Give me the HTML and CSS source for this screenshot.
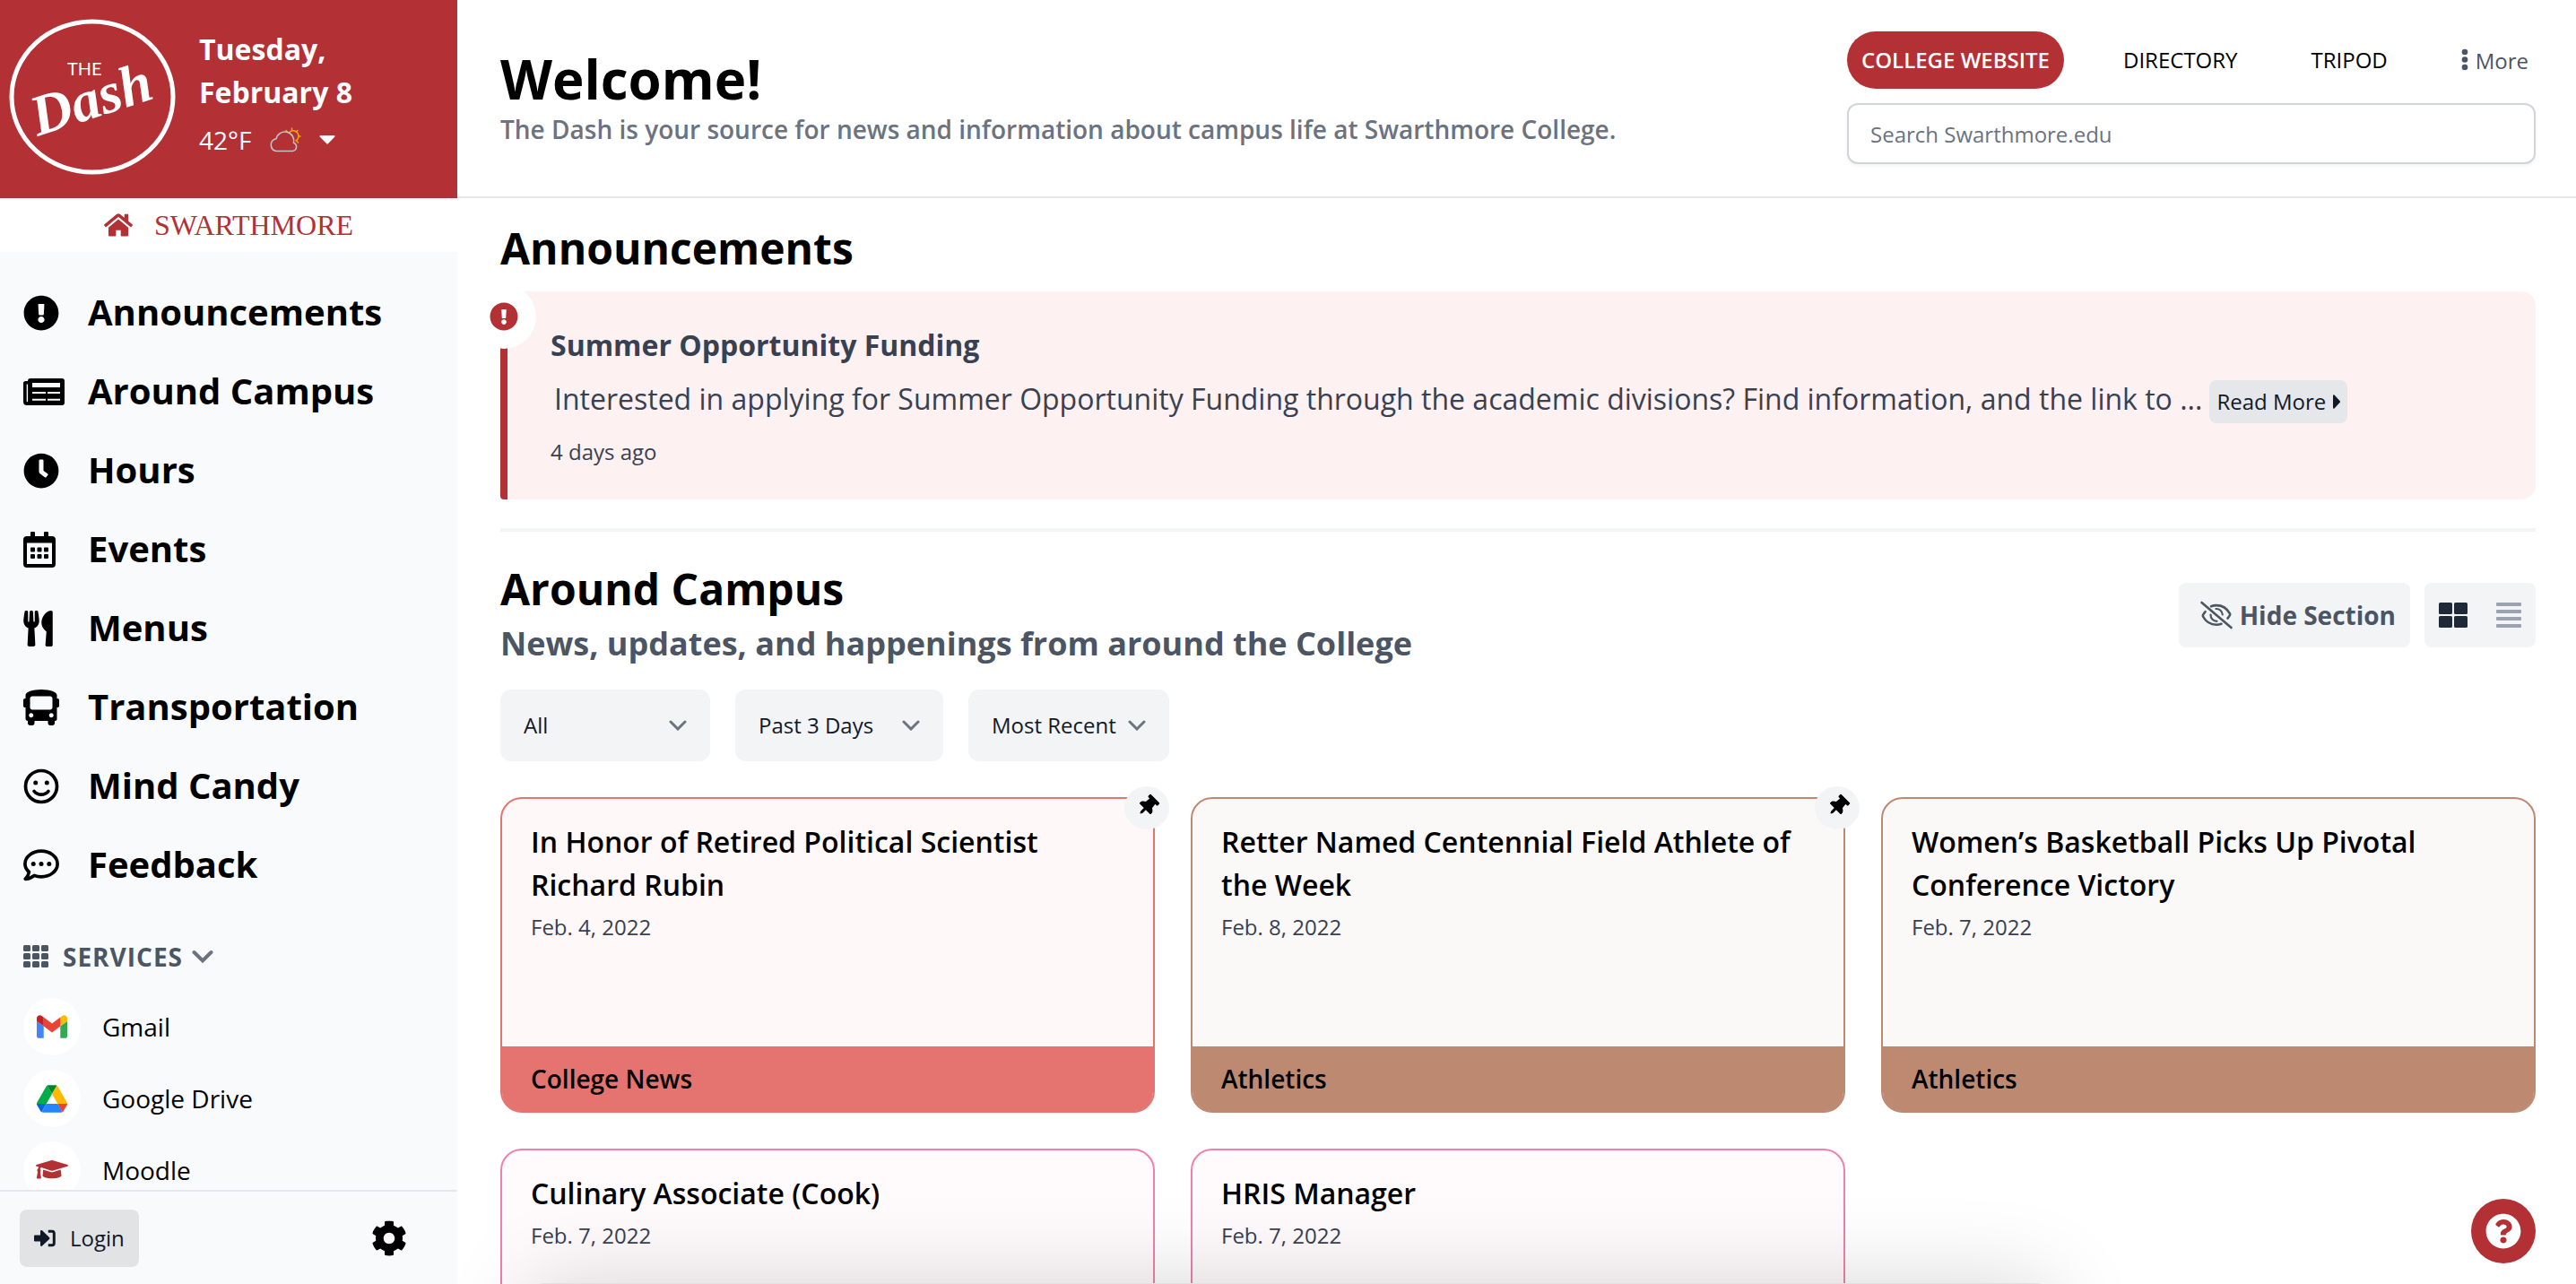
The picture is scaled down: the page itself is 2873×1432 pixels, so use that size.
FILE: index.html
```html
<!DOCTYPE html>
<html lang="en">
<head>
  <meta charset="UTF-8">
  <meta name="viewport" content="width=device-width, initial-scale=1.0">
  <title>The Dash</title>
  <link rel="stylesheet" href="styles.css">
</head>
<body>
  <div class="app">
    <aside class="sidebar">
      <div class="brand">
        <svg class="brand-logo" viewBox="0 0 186 176" role="img" aria-label="The Dash">
          <ellipse cx="93" cy="88" rx="90" ry="84" fill="none" stroke="#fff" stroke-width="5"/>
          <text class="logo-the" x="65" y="64">THE</text>
          <text class="logo-dash" x="32" y="132" transform="rotate(-18 32 132)">Dash</text>
        </svg>
        <div class="brand-info">
          <div class="brand-date">Tuesday,<br>February 8</div>
          <div class="brand-weather">
            <span>42°F</span>
            <svg class="weather-icon" viewBox="0 0 36 28" fill="none" stroke-linecap="round">
              <g stroke="#f5a800" stroke-width="1.5">
                <path d="M22 6.5a6 6 0 1 1 8 8.5"/>
                <path d="M25.5 1v2M19 3.5l1.5 1.5M32 3.5l-1.5 1.5M33 10h2M31 15.5l1.5 1.5"/>
              </g>
              <path d="M8 26.5a7 7 0 0 1-1-13.5 4.500 4.500 0 0 1 1-.2 10 10 0 0 1 19.500 4.500 4.800 4.800 0 0 1-1 9.200z" fill="#b33035" stroke="#c4c4c4" stroke-width="1.6"/>
            </svg>
            <svg class="weather-caret" viewBox="0 0 18 10" fill="#fff"><path d="M1.5 0h15a1 1 0 0 1 .7 1.7L9.800 9.200a1 1 0 0 1-1.500 0L.8 1.700A1 1 0 0 1 1.500 0z"/></svg>
          </div>
        </div>
      </div>

      <a class="home-link" href="#">
        <svg class="home-icon" viewBox="0 0 32 26" fill="currentColor">
          <path d="M16 6.5 5 15.7V24.500a1 1 0 0 0 1 1h6.500a.8.8 0 0 0 .8-.8v-6h5.400v6a.8.8 0 0 0 .8.8H26a1 1 0 0 0 1-1v-8.800z"/>
          <path d="M27 8.500V1.500a.8.8 0 0 0-.8-.8h-2.700a.8.8 0 0 0-.8.800v3.200L18 1a3.200 3.200 0 0 0-4 0L.4 12.300a.8.8 0 0 0-.1 1.100l1.200 1.500a.8.8 0 0 0 1.100.1L15.500 4.300a.8.8 0 0 1 1 0L29.400 15a.8.8 0 0 0 1.100-.1l1.200-1.500a.8.8 0 0 0-.1-1.100z"/>
        </svg>
        <span>SWARTHMORE</span>
      </a>

      <div class="sidebar-scroll">
        <nav class="nav">
          <a class="nav-item" href="#">
            <span class="nav-icon"><svg width="40" height="40" viewBox="0 0 512 512"><path d="M504 256c0 136.997-111.043 248-248 248S8 392.997 8 256C8 119.083 119.043 8 256 8s248 111.083 248 248zm-248 50c-25.405 0-46 20.595-46 46s20.595 46 46 46 46-20.595 46-46-20.595-46-46-46zm-43.673-165.346l7.418 136c.347 6.364 5.609 11.346 11.982 11.346h48.546c6.373 0 11.635-4.982 11.982-11.346l7.418-136c.375-6.874-5.098-12.654-11.982-12.654h-63.383c-6.884 0-12.356 5.78-11.981 12.654z"/></svg></span>
            Announcements
          </a>
          <a class="nav-item" href="#">
            <span class="nav-icon"><svg width="46" height="30" viewBox="0 0 46 30"><path fill-rule="evenodd" d="M8 0h35a3 3 0 0 1 3 3v24a3 3 0 0 1-3 3H4a4 4 0 0 1-4-4V5.500A2.500 2.500 0 0 1 2.500 3H5a3 3 0 0 1 3-3zM10 5v5h31V5zM10 15v2h15v-2zM27 15v2h14v-2zM10 22.700v2h15v-2zM27 22.700v2h14v-2zM3.700 6.500v19a.7.7 0 0 0 1.400 0v-19z"/></svg></span>
            Around Campus
          </a>
          <a class="nav-item" href="#">
            <span class="nav-icon"><svg width="40" height="40" viewBox="0 0 512 512"><path d="M256,8C119,8,8,119,8,256S119,504,256,504,504,393,504,256,393,8,256,8Zm92.490,313h0l-20,25a16,16,0,0,1-22.490,2.500h0l-67-49.720a40,40,0,0,1-15-31.230V112a16,16,0,0,1,16-16h32a16,16,0,0,1,16,16V256l58,42.500A16,16,0,0,1,348.490,321Z"/></svg></span>
            Hours
          </a>
          <a class="nav-item" href="#">
            <span class="nav-icon"><svg width="36" height="40" viewBox="0 0 36 40"><path fill-rule="evenodd" d="M4 5h4V1a1 1 0 0 1 1-1h3a1 1 0 0 1 1 1v4h10V1a1 1 0 0 1 1-1h3a1 1 0 0 1 1 1v4h4a4 4 0 0 1 4 4v27a4 4 0 0 1-4 4H4a4 4 0 0 1-4-4V9a4 4 0 0 1 4-4zM4 12.500v23.500h28V12.500z"/><path d="M9 17.500h3a1 1 0 0 1 1 1v3a1 1 0 0 1-1 1H9a1 1 0 0 1-1-1v-3a1 1 0 0 1 1-1zM16.500 17.500h3a1 1 0 0 1 1 1v3a1 1 0 0 1-1 1h-3a1 1 0 0 1-1-1v-3a1 1 0 0 1 1-1zM24 17.500h3a1 1 0 0 1 1 1v3a1 1 0 0 1-1 1h-3a1 1 0 0 1-1-1v-3a1 1 0 0 1 1-1zM9 25h3a1 1 0 0 1 1 1v3a1 1 0 0 1-1 1H9a1 1 0 0 1-1-1v-3a1 1 0 0 1 1-1zM16.500 25h3a1 1 0 0 1 1 1v3a1 1 0 0 1-1 1h-3a1 1 0 0 1-1-1v-3a1 1 0 0 1 1-1zM24 25h3a1 1 0 0 1 1 1v3a1 1 0 0 1-1 1h-3a1 1 0 0 1-1-1v-3a1 1 0 0 1 1-1z"/></svg></span>
            Events
          </a>
          <a class="nav-item" href="#">
            <span class="nav-icon"><svg width="33" height="40" viewBox="0 0 416 512"><path d="M207.900 15.200c.8 4.700 16.100 94.500 16.100 128.800 0 52.300-27.800 89.600-68.900 104.600L168 486.700c.7 13.700-10.200 25.300-24 25.300H80c-13.700 0-24.700-11.500-24-25.300l12.900-238.100C27.700 233.600 0 196.200 0 144 0 109.600 15.300 19.900 16.100 15.200 19.300-5.100 61.400-5.400 64 16.300v141.200c1.300 3.400 15.100 3.200 16 0 1.400-25.300 7.900-139.200 8-141.800 3.300-20.800 44.700-20.800 47.900 0 .2 2.700 6.600 116.500 8 141.800.9 3.200 14.800 3.400 16 0V16.300c2.600-21.600 44.800-21.400 47.900-1.100zm119.200 285.700l-15 185.100c-1.200 14 9.900 26 23.900 26h56c13.300 0 24-10.700 24-24V24c0-13.200-10.700-24-24-24-82.500 0-221.400 178.500-64.900 300.900z"/></svg></span>
            Menus
          </a>
          <a class="nav-item" href="#">
            <span class="nav-icon"><svg width="40" height="40" viewBox="0 0 512 512"><path d="M488 128h-8V80c0-44.800-99.200-80-224-80S32 35.200 32 80v48h-8c-13.250 0-24 10.740-24 24v80c0 13.250 10.750 24 24 24h8v160c0 17.670 14.330 32 32 32v32c0 17.670 14.330 32 32 32h32c17.670 0 32-14.330 32-32v-32h192v32c0 17.670 14.330 32 32 32h32c17.670 0 32-14.330 32-32v-32h6.400c16 0 25.600-12.800 25.600-25.600V256h8c13.250 0 24-10.750 24-24v-80c0-13.260-10.750-24-24-24zM112 400c-17.670 0-32-14.330-32-32s14.330-32 32-32 32 14.330 32 32-14.330 32-32 32zm16-112c-17.670 0-32-14.330-32-32V128c0-17.670 14.330-32 32-32h256c17.670 0 32 14.330 32 32v128c0 17.670-14.330 32-32 32H128zm272 112c-17.670 0-32-14.330-32-32s14.330-32 32-32 32 14.330 32 32-14.330 32-32 32z"/></svg></span>
            Transportation
          </a>
          <a class="nav-item" href="#">
            <span class="nav-icon"><svg width="40" height="40" viewBox="0 0 40 40"><circle cx="20" cy="20" r="17.500" fill="none" stroke="#000" stroke-width="3.700"/><circle cx="13.700" cy="16" r="2.500"/><circle cx="26.300" cy="16" r="2.500"/><path d="M12 25.300a10.300 10.300 0 0 0 16 0" fill="none" stroke="#000" stroke-width="3.600" stroke-linecap="round"/></svg></span>
            Mind Candy
          </a>
          <a class="nav-item" href="#">
            <span class="nav-icon"><svg width="40" height="36" viewBox="0 0 40 36"><path d="M20 2.200c10 0 18.100 6.400 18.100 14.300S30 30.800 20 30.800c-2.800 0-5.500-.5-7.800-1.400-2.700 2-6.200 3.800-10 3.900 2.400-2.500 3.800-5.200 4.200-7.800C3.500 23 1.900 19.900 1.900 16.500 1.900 8.600 10 2.200 20 2.200z" fill="none" stroke="#000" stroke-width="3.700" stroke-linejoin="round"/><circle cx="11.200" cy="16.500" r="2.500"/><circle cx="20" cy="16.500" r="2.500"/><circle cx="28.800" cy="16.500" r="2.500"/></svg></span>
            Feedback
          </a>
        </nav>

        <button class="services-toggle" type="button">
          <svg width="28" height="26" viewBox="0 0 28 26" fill="#4b5563">
            <rect width="8" height="7" rx="1.5"/><rect x="10" width="8" height="7" rx="1.5"/><rect x="20" width="8" height="7" rx="1.5"/>
            <rect y="9" width="8" height="7" rx="1.5"/><rect x="10" y="9" width="8" height="7" rx="1.5"/><rect x="20" y="9" width="8" height="7" rx="1.5"/>
            <rect y="18" width="8" height="7" rx="1.5"/><rect x="10" y="18" width="8" height="7" rx="1.5"/><rect x="20" y="18" width="8" height="7" rx="1.5"/>
          </svg>
          <span class="services-label">SERVICES</span>
          <svg width="24" height="16" viewBox="0 0 24 16"><path d="M2.500 3 12 12.500 21.500 3" fill="none" stroke="#6b7280" stroke-width="4" stroke-linecap="round"/></svg>
        </button>

        <div class="services">
          <a class="service" href="#">
            <span class="service-icon"><svg width="34" height="26" viewBox="52 42 88 66"><path fill="#4285f4" d="M58 108h14V74L52 59v43c0 3.320 2.690 6 6 6"/><path fill="#34a853" d="M120 108h14c3.320 0 6-2.690 6-6V59l-20 15"/><path fill="#fbbc04" d="M120 48v26l20-15v-8c0-7.420-8.470-11.650-14.400-7.200"/><path fill="#ea4335" d="M72 74V48l24 18 24-18v26L96 92"/><path fill="#c5221f" d="M52 51v8l20 15V48l-5.600-4.200c-5.940-4.450-14.400-.22-14.400 7.200"/></svg></span>
            Gmail
          </a>
          <a class="service" href="#">
            <span class="service-icon"><svg width="34" height="31" viewBox="0 0 87.300 78"><path fill="#0066da" d="m6.600 66.850 3.850 6.650c.8 1.400 1.950 2.500 3.300 3.300l13.750-23.800h-27.500c0 1.550.4 3.100 1.200 4.500z"/><path fill="#00ac47" d="m43.650 25-13.750-23.800c-1.350.8-2.500 1.900-3.300 3.300l-25.400 44a9.060 9.060 0 0 0-1.200 4.500h27.500z"/><path fill="#ea4335" d="m73.550 76.800c1.350-.8 2.500-1.900 3.300-3.300l1.600-2.750 7.650-13.250c.8-1.400 1.200-2.950 1.200-4.500h-27.502l5.852 11.500z"/><path fill="#00832d" d="m43.650 25 13.750-23.800c-1.350-.8-2.900-1.200-4.500-1.200h-18.500c-1.600 0-3.150.45-4.500 1.200z"/><path fill="#2684fc" d="m59.800 53h-32.300l-13.750 23.800c1.350.8 2.900 1.200 4.500 1.200h50.800c1.600 0 3.150-.45 4.500-1.200z"/><path fill="#ffba00" d="m73.400 26.500-12.700-22c-.8-1.400-1.950-2.500-3.300-3.300l-13.750 23.800 16.150 28h27.450c0-1.550-.4-3.100-1.200-4.500z"/></svg></span>
            Google Drive
          </a>
          <a class="service" href="#">
            <span class="service-icon"><svg width="36" height="24" viewBox="0 0 36 24" fill="#b33035"><path d="M35.300 6 19.300 1.200a4.500 4.500 0 0 0-2.600 0L.7 6c-.9.300-.9 1.400 0 1.700l2.600.8c-.6.700-.9 1.400-1 2.300a1.700 1.700 0 0 0-.2 2.900L.9 20.500c-.1.500.2.900.8.900h3.500c.5 0 .9-.4.700-.9l-1.100-6.800a1.700 1.700 0 0 0-.1-2.800c.1-.8.5-1.400 1.200-1.800l10.800 3.400c.6.200 1.700.3 2.600 0l16-4.800c.9-.3.900-1.400 0-1.700z"/><path d="M19.700 13.900c-1.500.4-2.700.2-3.400 0L8.200 11.500 7.500 18c0 1.800 4.700 3.300 10.500 3.300S28.500 19.800 28.500 18l-.8-6.500z"/></svg></span>
            Moodle
          </a>
        </div>
      </div>

      <div class="sidebar-footer">
        <button class="login" type="button">
          <svg width="24" height="20" viewBox="0 0 24 20" fill="#111827"><path d="M0 7.500A1 1 0 0 1 1 6.500h6V2.200a1.200 1.200 0 0 1 2-.9l8 7.700a1.300 1.300 0 0 1 0 1.900l-8 7.700a1.200 1.200 0 0 1-2-.9v-4.200H1a1 1 0 0 1-1-1z"/><path d="M15.800 2.300h4.200a2.300 2.300 0 0 1 2.300 2.300v10.800a2.300 2.300 0 0 1-2.300 2.300h-4.200" fill="none" stroke="#111827" stroke-width="3"/></svg>
          Login
        </button>
        <button class="settings" type="button" aria-label="Settings">
          <svg width="40" height="40" viewBox="0 0 512 512"><path d="M487.400 315.700l-42.600-24.600c4.300-23.200 4.300-47 0-70.200l42.600-24.600c4.900-2.800 7.100-8.600 5.500-14-11.100-35.600-30-67.800-54.700-94.600-3.800-4.100-10-5.100-14.800-2.300L380.800 110c-17.900-15.400-38.500-27.300-60.800-35.100V25.800c0-5.600-3.900-10.500-9.400-11.700-36.700-8.200-74.300-7.800-109.200 0-5.500 1.200-9.400 6.100-9.400 11.700V75c-22.200 7.900-42.800 19.800-60.800 35.100L88.700 85.500c-4.900-2.800-11-1.900-14.800 2.300-24.700 26.700-43.600 58.900-54.700 94.600-1.700 5.400.6 11.200 5.500 14L67.300 221c-4.300 23.200-4.300 47 0 70.200l-42.600 24.600c-4.900 2.800-7.100 8.600-5.500 14 11.100 35.600 30 67.800 54.700 94.600 3.800 4.100 10 5.100 14.800 2.300l42.600-24.600c17.900 15.400 38.500 27.300 60.800 35.100v49.200c0 5.600 3.900 10.500 9.400 11.700 36.700 8.200 74.300 7.800 109.200 0 5.500-1.200 9.400-6.100 9.400-11.700v-49.200c22.200-7.900 42.800-19.800 60.800-35.100l42.600 24.600c4.900 2.800 11 1.900 14.800-2.300 24.700-26.700 43.600-58.900 54.700-94.600 1.500-5.500-.7-11.300-5.600-14.100zM256 336c-44.100 0-80-35.900-80-80s35.900-80 80-80 80 35.900 80 80-35.900 80-80 80z"/></svg>
        </button>
      </div>
    </aside>

    <div class="page">
      <header class="header">
        <div class="welcome">
          <h1>Welcome!</h1>
          <p>The Dash is your source for news and information about campus life at Swarthmore College.</p>
        </div>
        <div class="header-tools">
          <nav class="top-nav">
            <a class="top-link active" href="#">COLLEGE WEBSITE</a>
            <a class="top-link" href="#">DIRECTORY</a>
            <a class="top-link" href="#">TRIPOD</a>
            <button class="more" type="button">
              <svg width="8" height="26" viewBox="0 0 8 26" fill="#4b5563"><circle cx="4" cy="4" r="3.300"/><circle cx="4" cy="12.500" r="3.300"/><circle cx="4" cy="21" r="3.300"/></svg>
              More
            </button>
          </nav>
          <input class="search" type="search" placeholder="Search Swarthmore.edu" aria-label="Search Swarthmore.edu">
        </div>
      </header>

      <main class="main">
        <section class="announcements">
          <h2>Announcements</h2>
          <article class="alert">
            <div class="alert-badge">
              <svg width="32" height="32" viewBox="0 0 512 512" fill="#b33035"><path d="M504 256c0 136.997-111.043 248-248 248S8 392.997 8 256C8 119.083 119.043 8 256 8s248 111.083 248 248zm-248 50c-25.405 0-46 20.595-46 46s20.595 46 46 46 46-20.595 46-46-20.595-46-46-46zm-43.673-165.346l7.418 136c.347 6.364 5.609 11.346 11.982 11.346h48.546c6.373 0 11.635-4.982 11.982-11.346l7.418-136c.375-6.874-5.098-12.654-11.982-12.654h-63.383c-6.884 0-12.356 5.780-11.981 12.654z"/></svg>
            </div>
            <h3>Summer Opportunity Funding</h3>
            <div class="alert-body">
              <p>Interested in applying for Summer Opportunity Funding through the academic divisions? Find information, and the link to ...</p>
              <button class="read-more" type="button">Read More <svg width="8" height="16" viewBox="0 0 8 16" fill="#111827"><path d="M0 1.200A1 1 0 0 1 1.500.5L7.500 7a1.400 1.400 0 0 1 0 2l-6 6.500A1 1 0 0 1 0 14.800z"/></svg></button>
            </div>
            <time>4 days ago</time>
          </article>
        </section>

        <hr class="divider">

        <section class="campus">
          <div class="section-head">
            <div>
              <h2>Around Campus</h2>
              <p class="section-sub">News, updates, and happenings from around the College</p>
            </div>
            <div class="section-tools">
              <button class="hide-section" type="button">
                <svg width="36" height="32" viewBox="0 0 36 32" fill="none" stroke="#4b5563" stroke-width="2.600" stroke-linecap="round"><path d="M1.500 2 34.500 30"/><path d="M12 6.200a16 16 0 0 1 6-1.100c6.500 0 12 3.700 15 9.300a1.700 1.700 0 0 1 0 1.600 18 18 0 0 1-2.500 3.500"/><path d="M23.500 25.800a16 16 0 0 1-5.500 1C11.500 26.800 6 23.100 3 17.500a1.700 1.700 0 0 1 0-1.600 18 18 0 0 1 2.600-3.700"/><path d="M17.500 9a7 7 0 0 1 7.300 6.500" stroke-width="2.200"/><path d="M11.500 15.500a7 7 0 0 0 7 7.300" stroke-width="2.200"/></svg>
                Hide Section
              </button>
              <div class="view-toggle">
                <button type="button" aria-label="Grid view"><svg width="32" height="28" viewBox="0 0 32 28" fill="#1f2937"><rect width="15" height="13" rx="1.5"/><rect x="17" width="15" height="13" rx="1.5"/><rect y="15" width="15" height="13" rx="1.5"/><rect x="17" y="15" width="15" height="13" rx="1.5"/></svg></button>
                <button type="button" aria-label="List view"><svg width="28" height="28" viewBox="0 0 28 28" fill="#9ca3af"><rect width="28" height="4" rx="1"/><rect y="8" width="28" height="4" rx="1"/><rect y="16" width="28" height="4" rx="1"/><rect y="24" width="28" height="4" rx="1"/></svg></button>
              </div>
            </div>
          </div>

          <div class="filters">
            <div class="filter filter-type">
              <select aria-label="Category"><option>All</option></select>
              <svg width="20" height="12" viewBox="0 0 20 12"><path d="M2 2l8 8 8-8"/></svg>
            </div>
            <div class="filter filter-range">
              <select aria-label="Date range"><option>Past 3 Days</option></select>
              <svg width="20" height="12" viewBox="0 0 20 12"><path d="M2 2l8 8 8-8"/></svg>
            </div>
            <div class="filter filter-sort">
              <select aria-label="Sort order"><option>Most Recent</option></select>
              <svg width="20" height="12" viewBox="0 0 20 12"><path d="M2 2l8 8 8-8"/></svg>
            </div>
          </div>

          <div class="cards">
            <article class="card news">
              <span class="pin"><svg viewBox="0 0 384 512"><path d="M298.028 214.267L285.793 96H328c13.255 0 24-10.745 24-24V24c0-13.255-10.745-24-24-24H56C42.745 0 32 10.745 32 24v48c0 13.255 10.745 24 24 24h42.207L85.972 214.267C37.465 236.820 0 277.261 0 328c0 13.255 10.745 24 24 24h136v104.007c0 1.242.289 2.467.845 3.578l24 48c2.941 5.882 11.364 5.893 14.311 0l24-48a8.008 8.008 0 0 0 .845-3.578V352h136c13.255 0 24-10.745 24-24-.001-51.029-37.742-91.255-85.972-113.733z"/></svg></span>
              <div class="card-body">
                <h3>In Honor of Retired Political Scientist Richard Rubin</h3>
                <time>Feb. 4, 2022</time>
              </div>
              <div class="card-tag">College News</div>
            </article>
            <article class="card athletics">
              <span class="pin"><svg viewBox="0 0 384 512"><path d="M298.028 214.267L285.793 96H328c13.255 0 24-10.745 24-24V24c0-13.255-10.745-24-24-24H56C42.745 0 32 10.745 32 24v48c0 13.255 10.745 24 24 24h42.207L85.972 214.267C37.465 236.820 0 277.261 0 328c0 13.255 10.745 24 24 24h136v104.007c0 1.242.289 2.467.845 3.578l24 48c2.941 5.882 11.364 5.893 14.311 0l24-48a8.008 8.008 0 0 0 .845-3.578V352h136c13.255 0 24-10.745 24-24-.001-51.029-37.742-91.255-85.972-113.733z"/></svg></span>
              <div class="card-body">
                <h3>Retter Named Centennial Field Athlete of the Week</h3>
                <time>Feb. 8, 2022</time>
              </div>
              <div class="card-tag">Athletics</div>
            </article>
            <article class="card athletics">
              <div class="card-body">
                <h3>Women’s Basketball Picks Up Pivotal Conference Victory</h3>
                <time>Feb. 7, 2022</time>
              </div>
              <div class="card-tag">Athletics</div>
            </article>
            <article class="card jobs">
              <div class="card-body">
                <h3>Culinary Associate (Cook)</h3>
                <time>Feb. 7, 2022</time>
              </div>
            </article>
            <article class="card jobs">
              <div class="card-body">
                <h3>HRIS Manager</h3>
                <time>Feb. 7, 2022</time>
              </div>
            </article>
          </div>
        </section>
      </main>
    </div>
  </div>

  <div class="bottom-sheet"></div>

  <button class="help" type="button" aria-label="Help">
    <svg width="40" height="40" viewBox="0 0 512 512" fill="#fff"><path d="M504 256c0 136.997-111.043 248-248 248S8 392.997 8 256C8 119.083 119.043 8 256 8s248 111.083 248 248zM262.655 90c-54.497 0-89.255 22.957-116.549 63.758-3.536 5.286-2.353 12.415 2.715 16.258l34.699 26.310c5.205 3.947 12.621 3.008 16.665-2.122 17.864-22.658 30.113-35.797 57.303-35.797 20.429 0 45.698 13.148 45.698 32.958 0 14.976-12.363 22.667-32.534 33.976C247.128 238.528 216 254.941 216 296v4c0 6.627 5.373 12 12 12h56c6.627 0 12-5.373 12-12v-1.333c0-28.462 83.186-29.647 83.186-106.667 0-58.002-60.165-102-116.531-102zM256 338c-25.365 0-46 20.635-46 46 0 25.364 20.635 46 46 46s46-20.636 46-46c0-25.365-20.635-46-46-46z"/></svg>
  </button>
</body>
</html>
```
FILE: styles.css
```css
* {
  box-sizing: border-box;
}

body {
  margin: 0;
  height: 100vh;
  overflow: hidden;
  background-color: #fff;
  color: #000;
  font-family: "Open Sans", "Noto Sans", sans-serif;
}

h1, h2, h3, p {
  margin: 0;
}

a {
  color: inherit;
  text-decoration: none;
}

button, input, select {
  font-family: inherit;
}

button {
  border: none;
  background: none;
  padding: 0;
  cursor: pointer;
}

svg {
  display: block;
  flex-shrink: 0;
}

.app {
  display: flex;
  height: 100%;
}

/* sidebar */

.sidebar {
  display: flex;
  flex-direction: column;
  flex-shrink: 0;
  width: 510px;
  background-color: #f9fafc;
}

.brand {
  display: flex;
  gap: 26px;
  flex-shrink: 0;
  height: 221px;
  padding-left: 10px;
  background-color: #b33035;
  color: #fff;
}

.brand-logo {
  width: 186px;
  height: 176px;
  margin-top: 20px;
}

.logo-the {
  fill: #fff;
  font-family: Lato, sans-serif;
  font-size: 20px;
}

.logo-dash {
  fill: #fff;
  font-family: "Liberation Serif", serif;
  font-size: 64px;
  font-style: italic;
  font-weight: 700;
}

.brand-info {
  padding-top: 31px;
}

.brand-date {
  font-size: 32px;
  line-height: 48px;
  font-weight: 700;
}

.brand-weather {
  display: flex;
  align-items: center;
  font-size: 28px;
  line-height: 58px;
}

.weather-icon {
  width: 36px;
  height: 28px;
  margin-left: 20px;
}

.weather-caret {
  width: 18px;
  height: 10px;
  margin-left: 20px;
}

.home-link {
  display: flex;
  align-items: center;
  justify-content: center;
  gap: 24px;
  flex-shrink: 0;
  height: 60px;
  background-color: #fff;
  color: #b33035;
  font-family: "Liberation Serif", serif;
  font-size: 32px;
}

.home-icon {
  width: 32px;
  height: 26px;
}

.sidebar-scroll {
  flex: 1;
  min-height: 0;
  padding: 22px 26px 0;
  overflow: hidden;
}

.nav-item {
  display: flex;
  align-items: center;
  height: 88px;
  font-size: 40px;
  font-weight: 700;
}

.nav-icon {
  width: 72px;
  padding-top: 4px;
}

.services-toggle {
  display: flex;
  align-items: center;
  margin-top: 36px;
  color: #4b5563;
  font-size: 28px;
  line-height: 48px;
  font-weight: 700;
}

.services-label {
  margin: 0 10px 0 16px;
  letter-spacing: 1px;
}

.services {
  display: flex;
  flex-direction: column;
  gap: 16px;
  margin-top: 22px;
}

.service {
  display: flex;
  align-items: center;
  gap: 24px;
  font-size: 28px;
}

.service-icon {
  display: flex;
  align-items: center;
  justify-content: center;
  width: 64px;
  height: 64px;
  border-radius: 50%;
  background-color: #fff;
}

.sidebar-footer {
  display: flex;
  align-items: center;
  justify-content: space-between;
  flex-shrink: 0;
  height: 105px;
  padding: 0 56px 0 22px;
  border-top: 2px solid #e5e7eb;
}

.login {
  display: flex;
  align-items: center;
  gap: 16px;
  height: 64px;
  padding: 0 16px;
  border-radius: 8px;
  background-color: #e2e3e5;
  color: #111827;
  font-size: 24px;
  font-weight: 500;
}

/* header */

.page {
  flex: 1;
  min-width: 0;
}

.header {
  display: flex;
  justify-content: space-between;
  height: 221px;
  padding: 35px 45px 0 48px;
  border-bottom: 2px solid #e5e7eb;
}

.welcome {
  padding-top: 17px;
}

.welcome h1 {
  font-size: 60px;
  line-height: 72px;
  font-weight: 700;
}

.welcome p {
  color: #6b7280;
  font-size: 28px;
  line-height: 40px;
  font-weight: 600;
}

.header-tools {
  display: flex;
  flex-direction: column;
  gap: 16px;
  width: 768px;
}

.top-nav {
  display: flex;
  align-items: center;
  gap: 50px;
}

.top-link {
  padding: 0 16px;
  border-radius: 32px;
  font-size: 24px;
  line-height: 64px;
  font-weight: 500;
}

.top-link.active {
  background-color: #b33035;
  color: #fff;
  font-weight: 600;
}

.more {
  display: flex;
  align-items: center;
  gap: 8px;
  margin-left: auto;
  padding-right: 8px;
  color: #4b5563;
  font-size: 24px;
  font-weight: 500;
}

.search {
  height: 68px;
  padding: 0 24px;
  border: 2px solid #d1d5db;
  border-radius: 12px;
  background-color: #fff;
  box-shadow: 0 2px 4px rgba(0, 0, 0, 0.05);
  font-size: 24px;
}

.search::placeholder {
  color: #6b7280;
}

/* content */

.main {
  padding: 26px 45px 0 48px;
}

.main h2 {
  font-size: 48px;
  line-height: 60px;
  font-weight: 700;
}

.alert {
  position: relative;
  margin-top: 18px;
  padding: 36px 48px 35px;
  border-left: 8px solid #b33035;
  border-radius: 4px 16px 16px 4px;
  background-color: #fef1f1;
  color: #374151;
}

.alert-badge {
  position: absolute;
  top: -8px;
  left: -40px;
  display: flex;
  align-items: center;
  justify-content: center;
  width: 72px;
  height: 72px;
  border-radius: 50%;
  background-color: #fff;
}

.alert h3 {
  font-size: 32px;
  line-height: 48px;
  font-weight: 700;
}

.alert-body {
  display: flex;
  align-items: baseline;
  gap: 8px;
  margin: 12px 0 14px;
  padding-left: 4px;
  font-size: 32px;
  line-height: 48px;
}

.read-more {
  display: flex;
  align-items: center;
  gap: 8px;
  flex-shrink: 0;
  height: 48px;
  padding: 0 8px;
  border-radius: 8px;
  background-color: #e5e7eb;
  color: #111827;
  font-size: 24px;
}

.alert time {
  display: block;
  font-size: 24px;
  line-height: 36px;
}

.divider {
  height: 4px;
  margin: 32px 0 34px;
  border: none;
  background-color: #f3f4f6;
}

.section-head {
  display: flex;
  align-items: center;
  justify-content: space-between;
}

.section-sub {
  margin-top: 4px;
  color: #4b5563;
  font-size: 36px;
  line-height: 54px;
  font-weight: 700;
}

.section-tools {
  display: flex;
  gap: 16px;
}

.hide-section {
  display: flex;
  align-items: center;
  gap: 8px;
  height: 72px;
  padding: 0 16px 0 24px;
  border-radius: 8px;
  background-color: #f3f4f6;
  color: #4b5563;
  font-size: 28px;
  font-weight: 700;
}

.view-toggle {
  display: flex;
  align-items: center;
  gap: 32px;
  height: 72px;
  padding: 0 16px;
  border-radius: 8px;
  background-color: #f3f4f6;
}

.filters {
  display: flex;
  gap: 28px;
  margin-top: 24px;
}

.filter {
  position: relative;
}

.filter select {
  width: 100%;
  height: 80px;
  padding: 0 26px;
  border: none;
  border-radius: 12px;
  background-color: #f3f4f6;
  color: #111827;
  font-size: 24px;
  appearance: none;
}

.filter svg {
  position: absolute;
  top: 34px;
  right: 26px;
  fill: none;
  stroke: #6b7280;
  stroke-width: 3;
  stroke-linecap: round;
  pointer-events: none;
}

.filter-type {
  width: 234px;
}

.filter-range {
  width: 232px;
}

.filter-sort {
  width: 224px;
}

/* cards */

.cards {
  display: grid;
  grid-template-columns: repeat(3, 1fr);
  gap: 40px;
  margin-top: 40px;
}

.card {
  position: relative;
  display: flex;
  flex-direction: column;
  min-height: 352px;
  border: 2px solid;
  border-radius: 24px;
}

.card-body {
  flex: 1;
  padding: 24px 32px;
}

.card h3 {
  color: #000;
  font-size: 32px;
  line-height: 48px;
  font-weight: 600;
}

.card time {
  display: block;
  margin-top: 5px;
  color: #374151;
  font-size: 24px;
  line-height: 36px;
}

.card-tag {
  padding: 0 32px;
  border-radius: 0 0 21px 21px;
  color: #000;
  font-size: 28px;
  line-height: 72px;
  font-weight: 600;
}

.card.news {
  border-color: #e57470;
  background-color: #fff8f8;
}

.news .card-tag {
  background-color: #e57470;
}

.card.athletics {
  border-color: #bd8a71;
  background-color: #fbf9f7;
}

.athletics .card-tag {
  background-color: #bd8a71;
}

.card.jobs {
  border-color: #ee80ab;
  background-color: #fffafc;
}

.pin {
  position: absolute;
  top: -14px;
  right: -18px;
  display: flex;
  align-items: center;
  justify-content: center;
  width: 50px;
  height: 48px;
  padding: 0 0 4px 2px;
  border-radius: 50%;
  background-color: #f3f4f6;
}

.pin svg {
  width: 18px;
  height: 24px;
  transform: rotate(45deg);
}

.bottom-sheet {
  position: fixed;
  top: calc(100% - 1px);
  left: 591px;
  right: 586px;
  height: 300px;
  border-radius: 16px;
  background-color: #e2e2e2;
  box-shadow: 0 0 100px rgba(0, 0, 0, 0.16);
}

.help {
  position: fixed;
  right: 45px;
  bottom: 23px;
  display: flex;
  align-items: center;
  justify-content: center;
  width: 72px;
  height: 72px;
  border-radius: 50%;
  background-color: #b33035;
}
```
